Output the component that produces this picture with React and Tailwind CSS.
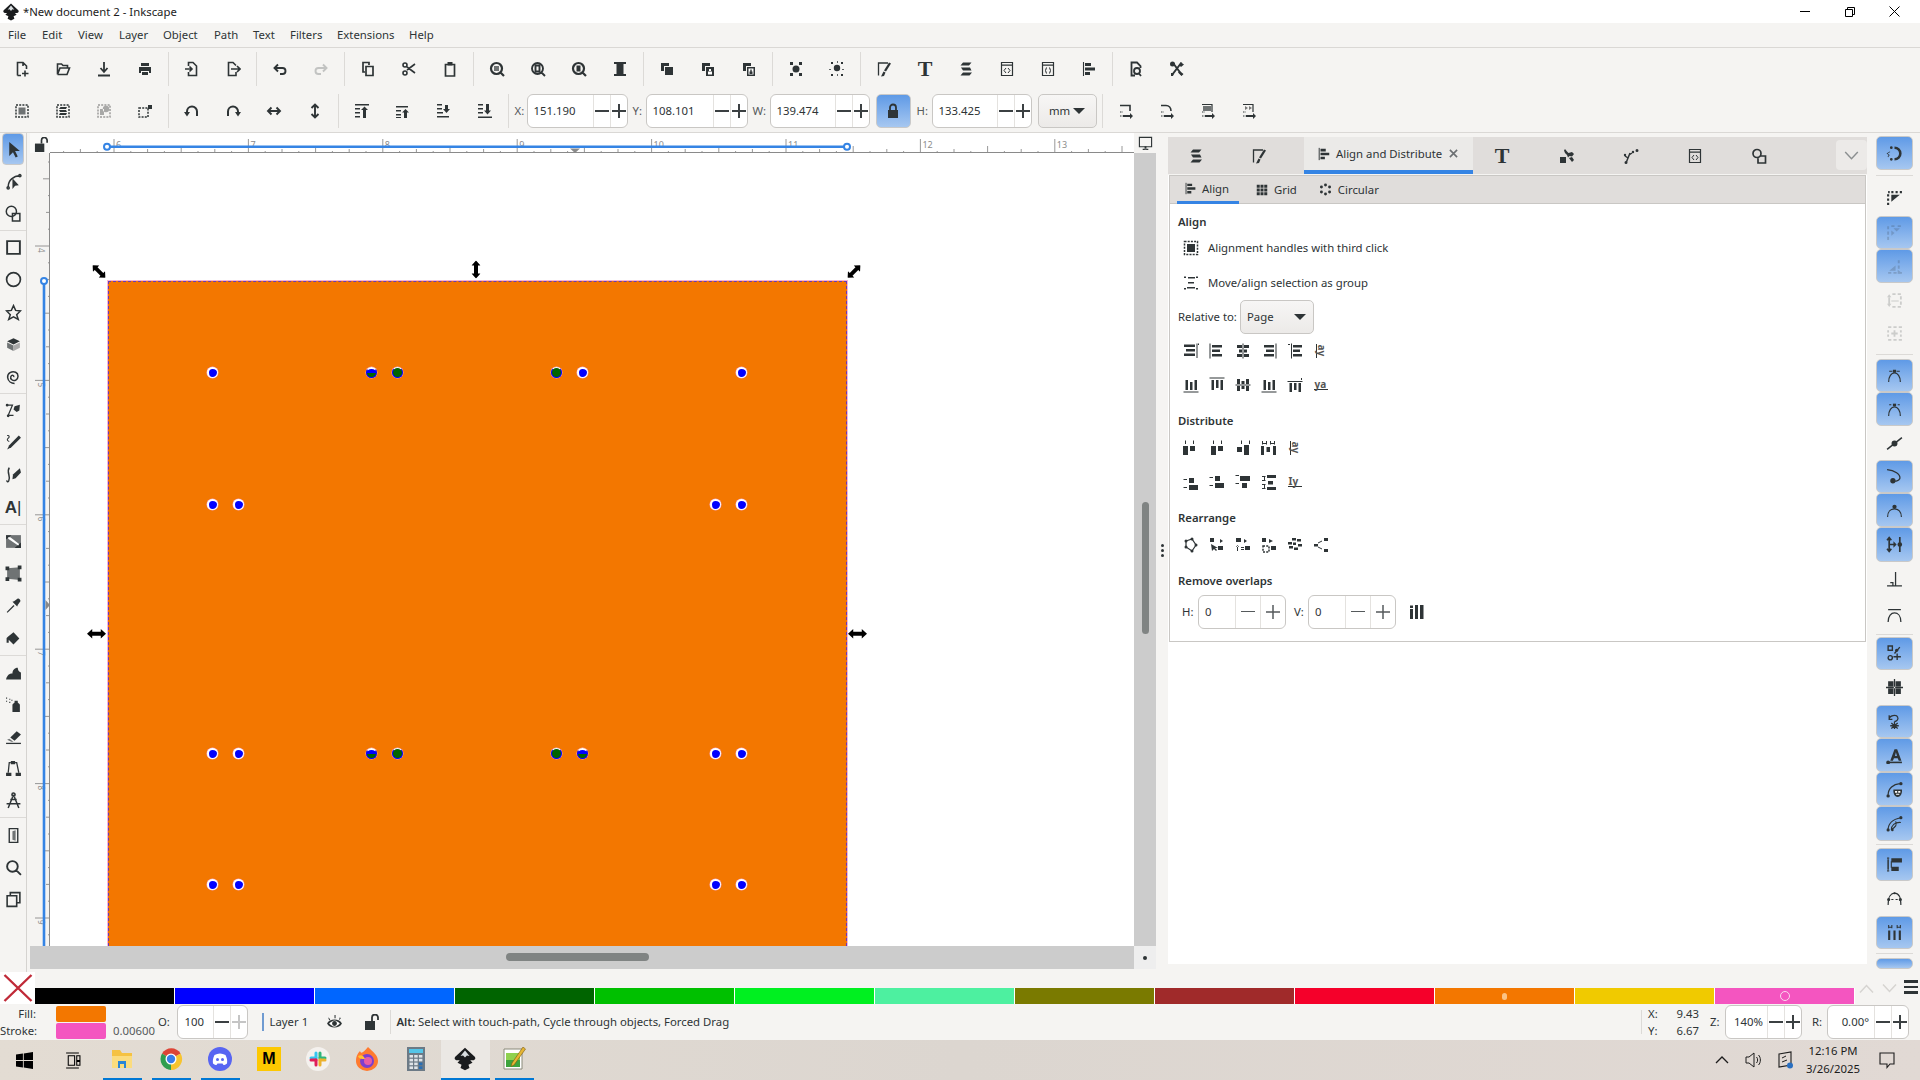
const circ = (x, y, r) => `M${x - r} ${y}a${r} ${r} 0 1 0 ${2 * r} 0a${r} ${r} 0 1 0 ${-2 * r} 0Z`

// every icon: f = filled path, s = stroked path, w = stroke width, g = grey fill, l = light fill, d = dashed stroke
const ICONS = {
  new: { s: 'M3.5 14.5V1.5H9L12.5 5V8M7 14.5H3.5M9 5V1.5M11 9.5V15.5M8 12.5H14.5', w: 1.6 },
  open: { s: 'M2.5 13.5V3H6.5L8 4.5H12.5V7M2.5 13.5H12L14.5 7H5L2.5 13.5', w: 1.6 },
  save: { s: 'M8 1V10M4.5 7L8 11L11.5 7M2 14.5H14', w: 1.8 },
  print: { f: 'M4 2H12V5H4ZM2 6H14V12H12V10H4V12H2ZM5 11H11V14H5Z' },
  import: { s: 'M4.5 5V1.5H9L12.5 5V14.5H4.5V11M1 8H8M5.5 5.5L8 8L5.5 10.5', w: 1.6 },
  export: { s: 'M11 4.5L8 1.5H3.5V14.5H11V11M6 8H15M12 5L15 8L12 11', w: 1.6 },
  undo: { s: 'M6 3.5L2.5 7L6 10.5M3 7H10.5A3 3 0 0 1 10.5 13H8', w: 1.9 },
  redo: { s: 'M10 3.5L13.5 7L10 10.5M13 7H5.5A3 3 0 0 0 5.5 13H8', w: 1.9 },
  copy: { s: 'M5 11H3V1.5H9V4M6 5.5H13V14.5H6Z', w: 1.7 },
  cut: { s: `M6 6L14 12M6 9L14 3${circ(4, 4, 2)}${circ(4, 12, 2)}`, w: 1.6 },
  paste: { s: 'M3.5 3.5H12.5V15H3.5Z', f: 'M5.5 1H10.5V4.5H5.5Z', w: 1.7 },
  zsel: { s: `${circ(7.5, 7.5, 5.5)}M11.5 11.5L15 15`, w: 2.2, g: 'M5 5H10V10H5Z' },
  zpage: { s: `${circ(7.5, 7.5, 5.5)}M11.5 11.5L15 15M5.5 4.5H9.5V10.5H5.5Z`, w: 1.9 },
  zdraw: { s: `${circ(7.5, 7.5, 5.5)}M11.5 11.5L15 15`, w: 2.2, f: 'M5.5 4.5H9.5V10.5H5.5Z' },
  zfit: { f: 'M2 1H14V3H2ZM2 13H14V15H2ZM4.5 3H11.5V13H4.5Z' },
  dup: { f: 'M2 2H10V5H5V10H2ZM6 6H14V14H6Z' },
  clone: { f: 'M2 2H10V5H5V10H2ZM6 6H14V15H6Z', wh: 'M8 10.5H12V13.5H8ZM9 8H11V10H9Z' },
  unlink: { f: 'M2 2H10V5H5V10H2ZM6 6H14V15H6Z', wh: 'M7.5 7.5H12.5V13.5H7.5Z', f2: 'M8.5 10.5H11.5V13H8.5ZM9.3 8.5H10.7V10.5H9.3Z' },
  group: { f: `M2 1h3v3H2ZM11 1h3v3h-3ZM2 12h3v3H2ZM11 12h3v3h-3Z${circ(8, 8, 3.5)}` },
  ungroup: { f: `M2 1h2v2H2ZM12 1h2v2h-2ZM2 13h2v2H2ZM12 13h2v2h-2Z${circ(8, 7, 3.2)}`, s: 'M8 1H9M1 8V9M14 8V9M8 14H9', w: 1.5 },
  fill: { s: 'M2.5 14.5V2H12', f: 'M13 1.5L15 2.5L10 10.5L8 9.5ZM7.5 10.5L9.5 11.5L8 15L5 15.5Z', w: 1.3 },
  layers: { f: 'M5 1.5H13.5L11 4.5H2.5ZM3 6.5H12L13.5 9.5H5ZM5 11.5H14L11.5 14.5H2.5Z' },
  xml: { s: 'M2.5 1.5H13.5V14.5H2.5ZM2.5 4.2H13.5', c: 'M7 7L5 9.5L7 12M9 7L11 9.5L9 12', w: 1.2 },
  css: { s: 'M2.5 1.5H13.5V14.5H2.5ZM2.5 4.2H13.5', c: 'M7 6.5C5.5 6.5 6.5 9.5 5 9.5C6.5 9.5 5.5 12.5 7 12.5M9 6.5C10.5 6.5 9.5 9.5 11 9.5C9.5 9.5 10.5 12.5 9 12.5', w: 1.2 },
  align: { s: 'M2.5 1V15', f: 'M4 2H10V5H4ZM4 6.5H14V9.5H4ZM4 11H9V14H4Z', w: 1.1 },
  docprop: { s: `M7 14.5H3.5V1.5H9L12.5 5V7${circ(9, 10, 3)}M11 12.5L13 15`, w: 1.8 },
  tools: { s: 'M4 2L13 14M12.5 1.5L3 14', f: `${circ(3.5, 3, 2.5)}M12 1.5L15 3.5L12 6L10 4ZM10.5 10L14.5 13L12.5 15L9 11.5ZM2 12L5 12L4 15L2 15Z`, w: 2 },
  selall: { d: 'M2 2H14V14H2Z', g: 'M4.5 4.5H11.5V11.5H4.5Z' },
  sellayers: { d: 'M2 2H14V14H2Z', f: 'M5.5 4H12L11 6H4ZM4 7H11L12 9H5ZM5 10H12L11 12H4Z' },
  deselect: { d: 'M2 2H14V14H2Z', dc: '#777', l: `M4 12V6H8V12Z${circ(10, 6, 3.2)}`, lc: '#888' },
  transform: { d: 'M2 5H11V14H2Z', f: 'M11 2H15V6H11Z' },
  rotl: { s: 'M3 9V8.5A5 5 0 0 1 13 8.5V13', w: 2, f: 'M0 9H6L3 13.5Z' },
  rotr: { s: 'M13 9V8.5A5 5 0 0 0 3 8.5V13', w: 2, f: 'M10 9H16L13 13.5Z' },
  fliph: { s: 'M2 8H14M5.5 4.5L2 8L5.5 11.5M10.5 4.5L14 8L10.5 11.5', w: 1.9 },
  flipv: { s: 'M8 1.5V14.5M4.5 5L8 1.5L11.5 5M4.5 11L8 14.5L11.5 11', w: 1.9 },
  top: { f: 'M1 1H15V2.5H1ZM1 5H6V6.5H1ZM1 9H6V10.5H1ZM1 13H6V14.5H1ZM9 15V7H7L10.5 3.5L14 7H12V15Z' },
  raise: { f: 'M1 3H13V4.5H1ZM1 7H6V8.5H1ZM1 11H6V12.5H1ZM1 14H6V15H1ZM9 15V9.5H7L10.5 6L14 9.5H12V15Z' },
  lower: { f: 'M1 1H6V2.5H1ZM1 5H6V6.5H1ZM1 9H7V10.5H1ZM1 13H13V14.5H1ZM9 2V6H7L10.5 10L14 6H12V2Z' },
  bottom: { f: 'M1 1H6V2.5H1ZM1 5H6V6.5H1ZM1 9H6V10.5H1ZM1 13.5H15V15H1ZM9 1V7.5H7L10.5 11.5L14 7.5H12V1Z' },
  aff1: { s: 'M2 2.5H12V8M12 4V8', f: 'M5 12V14H12V16L15 13L12 10V12Z', d2: 'M2 13H5M2 9H5', w: 1.6 },
  aff2: { s: 'M2 2.5H7C10 2.5 12 5 12 8', f: 'M5 12V14H12V16L15 13L12 10V12Z', d2: 'M2 13H5M2 9H5', w: 1.6 },
  aff3: { s: 'M2 1.5H12V9', g: 'M3 3H11V8H3Z', f: 'M5 12V14H12V16L15 13L12 10V12Z', d2: 'M2 13H5M2 9H5', w: 1.2 },
  aff4: { s: 'M2 1.5H12V9', l: 'M4 3L7 5L4 7ZM8 3L11 5L8 7Z', lc: '#777', f: 'M5 12V14H12V16L15 13L12 10V12Z', d2: 'M2 13H5M2 9H5', w: 1.2 },
  // tools
  arrow: { f: 'M4 1V14L7.5 10.5L10 15.5L12 14.5L9.5 9.5H14Z' },
  node: { s: `M3 13C3 7 8 2.5 14 2.5${circ(3, 14, 1)}${circ(14, 2.5, 1)}`, f: 'M7 5V15L9.5 12L13 11.5Z', w: 1.4 },
  builder: { s: `${circ(6, 6, 4.8)}M7 8H14V15H7Z`, w: 1.4 },
  rect: { s: 'M2 2H14V14H2Z', w: 1.8 },
  ellipse: { s: circ(8, 8, 6.5), w: 1.6 },
  star: { s: 'M8 1.5L10 6L14.5 6.5L11 10L12.5 14.5L8 12L3.5 14.5L5 10L1.5 6.5L6 6Z', w: 1.4 },
  box: { f: 'M2 5L8 2L14 5L8 8Z', g: 'M2 6V11L8 14V9Z', l: 'M14 6V11L8 14V9Z', lc: '#aaa' },
  spiral: { s: 'M8 8.5C9 7 6.5 6 5.5 8C4.5 10.5 7.5 12.5 10 11.5C13 10 13 5.5 10 4C6.5 2.5 2 5 2.5 9C3 12.5 6 14.5 9 14.5', w: 1.4 },
  bezier: { s: 'M2 3H7L3 12.5H8', f: `M9 4L14 2.5L13.5 8L11 9.5L8 7Z${circ(2, 3, 1.3)}${circ(3, 13, 1.3)}`, w: 1.2 },
  pencil: { f: 'M13 1.5L15 3.5L6 12.5L2 14.5L4 10.5Z', s: 'M2 1.5C4 1 5 3 2.5 4.5C1.5 5.5 3 7 4 7', w: 1 },
  calli: { s: 'M4 1.5C1 6 6 10 3.5 14C2.5 15.5 1.5 14.5 2 13.5', f: 'M7.5 8L14 2L15 6L10 11.5L7 12.5Z', w: 1.4 },
  gradient: { g: 'M1 2H15V14H1Z', wh: 'M3 4H5L13 10V11.5H12L3 5.5Z', f: 'M1 2H6L1 6ZM9 14L15 9V14Z' },
  mesh: { g: 'M2 3L14 2V14L2 13Z', f: 'M0.5 1.5h3.5v3.5H0.5ZM12 0.5h3.5v3.5H12ZM0.5 11.5h3.5v3.5H0.5ZM12 12h3.5v3.5H12Z' },
  dropper: { s: 'M2 14.5L8.5 8', f: 'M8.5 4L12 1.5C13 1 15 3 14.5 4L12 7.5L11.5 9L7 4.5Z', w: 1.2 },
  bucket: { f: 'M3 7L8 3L13.5 9L8 14.5L3.5 10V13H1.5V8.5Z' },
  tweak: { f: 'M1 14.5C2 10.5 4 9 7 9C7 6 9 3.5 12 3.5C12 5.5 13 7.5 15 8V14.5Z' },
  spray: { f: 'M7 8.5C7 7 8 7 9 6V4.5H12V6C13 7 14 7 14 8.5V15H7Z', s: 'M1 2H2M4 3H5M1 5H2M4 6H5M6 4H7', w: 1 },
  eraser: { f: 'M5 9L11 3L15 6L9 12Z', g: 'M4 10L8 13H6L2 11Z', s: 'M1 14.5H15', w: 1.2 },
  connector: { f: 'M5.5 1h4v3h-4ZM1 12h5v3H1ZM10 12h5v3h-5Z', s: 'M5.5 2.5H4L3 12M9.5 2.5H11L13 12', w: 1.2 },
  lpe: { s: `M8 2.5L3 15M8 2.5L13 15M1.5 11H14.5M5 7H11${circ(8, 2.5, 1.5)}`, w: 1.4 },
  pagetool: { s: 'M4 1.5H12V14.5H4Z', g: 'M7 4L10 3V13L7 12Z', w: 1.3 },
  zoom: { s: `${circ(7, 7, 5)}M10.5 10.5L15 15`, w: 1.8 },
  pages: { s: 'M5 4V1.5H14V11H11M2 4.5H11V14.5H2Z', w: 1.5 },
  // panel
  wrench: { f: 'M1 9H7V15H1ZM6 1L8 3.5L9.5 5L13 4L15 6L13 8.5L10.5 8L9 9.5L8 7L6 5L5 2.5Z M10 10L13 9L15 12L13 14Z' },
  pathfx: { s: 'M3 15L7 5M5 10L2 8M6 7L9 5', f: `${circ(14, 2.5, 1.5)}${circ(3, 14.5, 1.5)}${circ(10, 4, 1.2)}${circ(2, 7, 1.2)}`, w: 1.5 },
  shape: { s: `${circ(6, 5.5, 4)}M9 8H14.5V15H7V10`, w: 1.7 },
  grid: { f: 'M1 1h4v4H1ZM6 1h4v4H6ZM11 1h4v4h-4ZM1 6h4v4H1ZM6 6h4v4H6ZM11 6h4v4h-4ZM1 11h4v4H1ZM6 11h4v4H6ZM11 11h4v4h-4Z' },
  circular: { f: `${circ(8, 2.5, 1.8)}${circ(13, 5, 1.8)}${circ(13, 11, 1.8)}${circ(8, 13.5, 1.8)}${circ(3, 11, 1.8)}${circ(3, 5, 1.8)}` },
  handles3: { d: 'M1.5 1.5H14.5V14.5H1.5Z', f: 'M4 4H12V12H4Z' },
  groupAlign: { f: 'M1 1.5h2v1.5H1ZM13 1.5h2v1.5h-2ZM1 13h2v1.5H1ZM13 13h2v1.5h-2ZM5 2H12V3.5H5ZM5 7H11V8.5H5ZM4 12H12V13.5H4Z' },
  a1: { f: 'M1 1.5H12V4H1ZM3 6H12V8.5H3ZM1 10.5H12V13H1ZM13.5 .5H14.5V15H13.5ZM15 .5H16V2H15Z' },
  a2: { f: 'M.5 .5H1.5V15.5H.5ZM3 2H13V4.5H3ZM3 6.5H11V9H3ZM3 11H13V13.5H3Z' },
  a3: { f: 'M7.5 .5H8.5V15.5H7.5ZM2 2H7V5H2ZM9 2H14V5H9ZM4 6.5H7V9.5H4ZM9 6.5H12V9.5H9ZM2 11H7V14H2ZM9 11H14V14H9Z' },
  a4: { f: 'M14.5 .5H15.5V15.5H14.5ZM3 2H13V4.5H3ZM5 6.5H13V9H5ZM3 11H13V13.5H3Z' },
  a5: { f: 'M1 1H3V2H1ZM4 .5H5V15.5H4ZM6 2H15V4.5H6ZM6 6.5H13V9H6ZM6 11H15V13.5H6Z' },
  d1: { f: 'M2 .5H3V4H2ZM10 .5H11V4H10ZM0 6H5V15H0ZM7 6H12V11H7Z' },
  d2: { f: 'M4 .5H5V4H4ZM12 .5H13V4H12ZM2 6H7V15H2ZM9 6H14V11H9Z' },
  d3: { f: 'M6 .5H7V4H6ZM14 .5H15V4H14ZM2 7H7V12H2ZM9 5H14V15H9Z' },
  d4: { f: 'M1 1H2V3H5V1H6V4.5H5V4H2V4.5H1ZM9 1H10V3H13V1H14V4.5H13V4H10V4.5H9ZM0 6H3V15H0ZM5.5 7H9V12H5.5ZM12 6H15V15H12Z' },
  r1: { s: `M3 4L9 2L13 8L9 14L3 10Z`, f: `${circ(3, 4, 1.5)}${circ(9, 2, 1.5)}${circ(13, 8, 1.5)}${circ(9, 14, 1.5)}${circ(3, 10, 1.5)}`, w: 1.2 },
  r2: { f: 'M1 1H5V5H1ZM9 9H14V13H9ZM11 2L14 4L11 6ZM2 7L3 14L5 12L7 14L8 13L6 11H9Z' },
  r3: { f: 'M1 1H6V5H1ZM10 9H15V13H10ZM9 2L12 4L9 6ZM3 9V14H2V9ZM1 10L2.5 8L4 10ZM6 10H9V11H6ZM6 12H9V13H6Z' },
  r4: { f: 'M1 1H5V5H1ZM10 9H15V13H10ZM8 2L12 4L8 6Z', d: 'M2 9H8V15H2Z' },
  r5: { f: 'M5 1H9V3.5H5ZM10 2H14V4.5H10ZM1 5H5V7.5H1ZM6 5.5H9V8H6ZM11 7H15V9.5H11ZM2 9H6V11.5H2ZM7 10.5H11V13H7Z' },
  r6: { f: 'M1 7H5V9.5H1ZM11 1H15V4H11ZM11 12H15V15H11Z', s: 'M5 6L9 4M5 10L9 12', w: 1 },
  ill: { f: 'M1 1.5H4V4H1ZM1 5H4V15H1ZM6 1H9V15H6ZM11 1H14.5V15H11Z' },
  // snap bar
  magnet: { s: 'M8 2.5A5.5 5.5 0 1 1 8 13.5', f: `${circ(5, 2.5, 1.3)}${circ(5, 13.5, 1.3)}M4 6.5L1.5 8L3.5 9.5L2 11.5L1.5 11L2.5 9.5L0.5 8L3.5 6Z`, w: 2.4 },
  bbox: { s: 'M2 2H3.5M5 2H7M9 2H11M13 2H15M2 4V6M2 8V10M2 12V14', w: 2, f: 'M5 4.5H13L5 11Z' },
  bboxe: { s: 'M2 2V5M2 7V10M2 12V15M5 2H8M11 2H14', w: 1.8, f: 'M7 4H13L10 7ZM5 6V11L8 8.5Z' },
  bboxc: { s: 'M15 14H12M10 14H7M5 14H2M12 2V5M12 7V10', w: 1.8, f: 'M9 7V12H3ZM11 11L15 14L11 15Z' },
  bboxm: { s: 'M6 2H9M11 2H14M14 4V7M14 9V12M6 14H9M11 14H14M3 5V12', w: 1.7, f: 'M5 8H12V9H5ZM1 5L3 2L5 5ZM1 11L3 14L5 11Z' },
  bboxx: { s: 'M2 2H5M7 2H10M12 2H15M2 14H5M7 14H10M12 14H15M2 5V7M2 9V11M14 5V7M14 9V11M8 5V11M5 8H11', w: 1.7 },
  npath: { s: 'M2.5 14C2.5 9 5 5.5 8 5.5C11 5.5 13.5 9 13.5 14', f: 'M6.5 2.5H9.5V5.5H6.5ZM3 3.5H6V4.5H3ZM10 3.5H13V4.5H10Z', w: 1.1 },
  npath2: { s: 'M2.5 14C2.5 9 5 5.5 8 5.5C11 5.5 13.5 9 13.5 14M3 3.5H5M11 3.5H13', f: 'M6.5 2.5H9.5V5H6.5Z', w: 1.1 },
  nisect: { s: 'M1 13.5L15 2.5', f: circ(8, 8, 2.8), w: 1.4 },
  ncusp: { s: 'M1 1.5C8 2 14 6 13 10C12 12 9 13 6.5 12', f: circ(6.5, 12, 2.5), w: 1.2 },
  nsmooth: { s: 'M1.5 14C1.5 9 4.5 6.5 8 6.5C11.5 6.5 14.5 9 14.5 14', f: circ(8, 4.5, 2), w: 1.1 },
  nline: { s: 'M3 1.5V14.5M1 4L3 1.5L5 4M1 12L3 14.5L5 12M3 8H8M13 1V15', f: `M7 5L10 8L7 11Z${circ(13, 8, 2.2)}`, w: 1.6 },
  nperp: { s: 'M1 14H15M9 1V14M4 11H6.5V14', w: 1.2 },
  ntan: { s: 'M2 15C2 9 5 6.5 8 6.5C11 6.5 14 9 14 15M2 3.5H14', w: 1.2 },
  obj: { s: `M2 1H6V5H2Z${circ(4, 12, 2)}M7 11H14M10.5 8V14M8 8L13 2`, w: 1.3, f: circ(10, 5, 1.5) },
  ocenter: { f: 'M2 2H7V7H2ZM9 2H14V7H9ZM2 9H7V14H2ZM9 9H14V14H9ZM7.4 0H8.6V16H7.4ZM0 7.4H16V8.6H0Z' },
  orot: { s: 'M3 6C3 2 10 1 11 4C12 6 10 8 8 8M3 2V6H6M8 8V15M4 12H12M5 9.5L11 14.5M11 9.5L5 14.5', w: 1.2 },
  otext: { s: 'M3 14.5H15', f: `${circ(2, 14.5, 1.8)}M4 13L8 2H10.5L14.5 13H12L11 10.5H7.5L6.5 13ZM8.5 8.5H10.3L9.3 5Z` },
  ofx: { s: 'M2 13C2 7 7 3 13 2.5', f: `${circ(14, 2.5, 1.6)}${circ(2, 14, 1.6)}M7 8H15C15.5 11 14 15 11 15C8 15 6.5 11 7 8Z`, wh: 'M8.5 9.5H10.5V11H8.5ZM11.5 9.5H13.5V11H11.5ZM9.5 12H12.5V13H9.5Z', w: 1.2 },
  osec: { s: 'M2 14C2 8 6 4 14 2.5M5 14C5 10 8 6.5 14 7M5 14C9 11 11 9 9 6', f: `${circ(14, 2.5, 1.5)}${circ(2, 14, 1.5)}${circ(6, 14, 1.2)}`, w: 1 },
  obase: { f: 'M5 2H15V6H5ZM5 10H12V14H5Z', s: 'M2 3V13M1 2H3M1 14H3', w: 1.4, c: 'M5 5V11' },
  ocirc: { s: 'M2 14C2 6 5 3 8 3C11 3 14 6 14 14', w: 1.1, f: `${circ(8, 3, 1)}${circ(2.5, 9, 1.5)}${circ(13.5, 9, 1.5)}M5 8.5H7V9.5H5ZM9 8.5H11V9.5H9Z` },
  opage: { f: 'M2 6H4V15H2ZM7 6H9V15H7ZM12 6H14V15H12ZM2 1H3V2.5H5V1H6V4H5V3.5H3V4H2ZM10 1H11V2.5H13V1H14V4H13V3.5H11V4H10Z' },
  eye: { f: `${circ(8, 9, 3)}M1 9C3 4 13 4 15 9C13 14 3 14 1 9ZM2 3L4 5L3 6ZM8 1H9V4H8ZM13 3L14 4L12 6Z`, wh: 'M3 9C5 6 11 6 13 9C11 12 5 12 3 9Z', f2: circ(8, 9, 2.3) },
  lockopen: { f: 'M1 7H11V16H1Z', s: 'M8 7V3.5A3 3 0 0 1 14 3.5V6', w: 1.8 },
  lock: { f: 'M3 7H13V15H3Z', s: 'M5 7V4.5A3 3 0 0 1 11 4.5V7', w: 1.8 },
  monitor: { s: 'M1.5 1.5H14.5V11.5H1.5Z', f: 'M5 13.5H11V15H5ZM7 11H9V14H7Z', w: 1.2 },
}

function Ico({ n, size = 16, className = '', rot = 0 }) {
  const i = ICONS[n]
  const t = rot ? `rotate(${rot} 8 8)` : undefined
  return (
    <svg viewBox="0 0 16 16" width={size} height={size} className={`shrink-0 ${className}`}>
      <g transform={t}>
        {i.g && <path d={i.g} fill="#6f7374" />}
        {i.l && <path d={i.l} fill={i.lc || '#999'} />}
        {i.d && <path d={i.d} fill="none" stroke={i.dc || '#2e3436'} strokeWidth="1.5" strokeDasharray="2 1.2" />}
        {i.f && <path d={i.f} fill="#2e3436" fillRule="evenodd" />}
        {i.wh && <path d={i.wh} fill="#fff" />}
        {i.f2 && <path d={i.f2} fill="#2e3436" />}
        {i.s && <path d={i.s} fill="none" stroke="#2e3436" strokeWidth={i.w || 1.5} />}
        {i.c && <path d={i.c} fill="none" stroke="#2e3436" strokeWidth="1" />}
        {i.d2 && <path d={i.d2} fill="none" stroke="#2e3436" strokeWidth="1.2" strokeDasharray="1.5 1" />}
      </g>
    </svg>
  )
}

const Sep = () => (
  <div className="w-[6px] h-[34px] flex justify-center shrink-0">
    <div className="w-px h-full bg-[#dcdad7]" />
  </div>
)

function Bar({ items }) {
  return items.map((n, k) =>
    n === '|' ? <Sep key={k} /> : (
      <div key={k} className="w-[41px] h-[34px] flex items-center justify-center shrink-0">
        {n === 'T' && <span className="font-['Liberation_Serif',serif] font-bold text-[22px] leading-none text-[#2e3436]">T</span>}
        {n === 'redo' && <Ico n={n} className="opacity-25" />}
        {n === 'deselect' && <Ico n={n} className="opacity-70" />}
        {n !== 'T' && n !== 'redo' && n !== 'deselect' && <Ico n={n} />}
      </div>
    ))
}

const SpinBtn = ({ w, children }) => (
  <div className="flex items-center justify-center border-l border-[#e4e2df] shrink-0" style={{ width: w }}>{children}</div>
)

function Spin({ value, w, btn, text = 'pl-[6px]', dimPlus, strong = true }) {
  return (
    <div className="flex h-[34px] bg-white border border-[#c9c7c4] rounded-[6px] shrink-0 overflow-hidden" style={{ width: w }}>
      <div className={`flex-1 min-w-0 flex items-center text-[11.35px] text-[#2e3436] ${text}`}>{value}</div>
      <SpinBtn w={btn}><div className={`w-[14px] ${strong ? 'h-[2px] bg-[#3b4042]' : 'h-[1.5px] bg-[#555a5c]'}`} /></SpinBtn>
      <SpinBtn w={btn}>
        <svg viewBox="0 0 14 14" width="14" height="14"><path d="M0 7H14M7 0V14" stroke={dimPlus ? '#c5c5c5' : strong ? '#3b4042' : '#555a5c'} strokeWidth={strong ? 2 : 1.5} /></svg>
      </SpinBtn>
    </div>
  )
}

const TOOLS = [
  ['arrow', 'on'], ['node'], ['builder'], '|', ['rect'], ['ellipse'], ['star'], ['box'], ['spiral'], '|',
  ['bezier'], ['pencil'], ['calli'], ['A'], '|', ['gradient'], ['mesh'], ['dropper'], ['bucket'], '|',
  ['tweak'], ['spray'], ['eraser'], ['connector'], ['lpe'], '|', ['pagetool'], ['zoom'], ['pages'],
]

function Toolbox() {
  return (
    <div className="w-[27px] h-full border-r border-[#d5d3d0] flex flex-col shrink-0 overflow-hidden">
      {TOOLS.map((t, k) =>
        t === '|' ? <div key={k} className="h-px bg-[#dcdad7] my-[0.5px] shrink-0" /> : (
          <div key={k} className={`h-[32.2px] mx-[2px] flex items-center justify-center shrink-0 ${t[1] ? 'bg-linear-to-b from-[#5f9ae6] to-[#a6c7f0] border border-[#c9c9c9] rounded-[4px]' : ''}`}>
            {t[0] === 'A'
              ? <span className="font-['Liberation_Sans',sans-serif] font-bold text-[17px] text-[#2e3436] leading-none">A<span className="font-normal">|</span></span>
              : <Ico n={t[0]} size={17} />}
          </div>
        ))}
    </div>
  )
}

const TOP_LABELS = [6, 7, 8, 9, 10, 11, 12, 13]

function TopRuler() {
  const ticks = []
  for (let i = -3; i < 62; i++) {
    const x = 64 + i * 16.8
    const len = i % 8 === 0 ? 14 : i % 4 === 0 ? 7 : i % 2 === 0 ? 4 : 2
    ticks.push(<path key={i} d={`M${x} 20V${20 - len}`} stroke="#7d7d7d" strokeWidth="0.8" />)
  }
  return (
    <svg width="1084" height="20" className="block">
      {ticks}
      <path d="M0 19.5H1084" stroke="#8a8a8a" />
      {TOP_LABELS.map((l, k) => (
        <text key={l} x={66 + k * 134.4} y="15" fontSize="9" fill="#8c8c8c" fontFamily="Noto Sans, sans-serif">{l}</text>
      ))}
      <path d="M57 13.7H797" stroke="#3584e4" strokeWidth="2.6" />
      <circle cx="57" cy="13.7" r="3" fill="#fff" stroke="#3584e4" strokeWidth="2" />
      <circle cx="797" cy="13.7" r="3" fill="#fff" stroke="#3584e4" strokeWidth="2" />
      <path d="M520 15.5H530L525 20Z" fill="#8a8a8a" />
    </svg>
  )
}

function LeftRuler() {
  const ticks = []
  for (let i = -5; i < 48; i++) {
    const y = 93 + i * 16.8
    const len = i % 8 === 0 ? 15 : i % 4 === 0 ? 7 : i % 2 === 0 ? 4 : 2
    ticks.push(<path key={i} d={`M20 ${y}H${20 - len}`} stroke="#7d7d7d" strokeWidth="0.8" />)
  }
  return (
    <svg width="20" height="793" className="block shrink-0">
      {ticks}
      <path d="M19.5 0V793" stroke="#8a8a8a" />
      {[4, 5, 6, 7, 8, 9].map((l, k) => (
        <text key={l} x="0" y="0" fontSize="8" fill="#8c8c8c" fontFamily="Noto Sans, sans-serif" transform={`translate(8 ${95 + k * 134.4}) rotate(90)`}>{l}</text>
      ))}
      <path d="M14 128V793" stroke="#3584e4" strokeWidth="2.6" />
      <circle cx="14" cy="128" r="3" fill="#fff" stroke="#3584e4" strokeWidth="2" />
      <path d="M15.5 447V457L20 452Z" fill="#8a8a8a" />
    </svg>
  )
}

const DOTS = [
  [212, 372, 'b'], [371, 372, 'h'], [397, 372, 'g'], [556, 372, 'g'], [582, 372, 'b'], [741, 372, 'b'],
  [212, 504, 'b'], [238, 504, 'b'], [715, 504, 'b'], [741, 504, 'b'],
  [212, 753, 'b'], [238, 753, 'b'], [371, 753, 'h'], [397, 753, 'g'], [556, 753, 'g'], [582, 753, 'h'], [715, 753, 'b'], [741, 753, 'b'],
  [212, 884, 'b'], [238, 884, 'b'], [715, 884, 'b'], [741, 884, 'b'],
]

const DOT_CLS = {
  b: 'bg-[#0000ff] border-white border-t-2 border-l-2',
  h: 'bg-linear-to-b from-[#0000ff] from-50% to-[#006400] to-50% border-[#0000ff] border-t-white border-t-2',
  g: 'bg-[#006400] border-[#0000ff] border-t-white',
}

function Dots() {
  return DOTS.map(([x, y, v], k) => (
    <span
      key={k}
      className={`absolute w-[11px] h-[11px] rounded-full border shadow-[0_0_0_0.5px_#f5a6c8] ${DOT_CLS[v]}`}
      style={{ left: x - 50 - 5.5, top: y - 153 - 5.5 }}
    />
  ))
}

function Handle({ className, rot, w = 20 }) {
  return (
    <svg viewBox="0 0 20 10" width={w} height={w / 2} className={`absolute ${className}`} style={{ transform: `rotate(${rot}deg)` }}>
      <path d="M0 5L5.5 0V2.8H14.5V0L20 5L14.5 10V7.2H5.5V10Z" fill="#000" />
    </svg>
  )
}

function Canvas() {
  return (
    <div className="w-[1126px] h-full shrink-0 flex flex-col">
      <div className="flex h-[20px] bg-white shrink-0">
        <div className="w-[20px] flex items-start justify-center pt-[4px] pl-[3px] bg-[#f9f9f8]"><Ico n="lockopen" size={15} /></div>
        <TopRuler />
        <div className="w-[22px] bg-[#f5f4f2] flex items-center justify-center"><Ico n="monitor" size={15} /></div>
      </div>
      <div className="flex flex-1 min-h-0">
        <LeftRuler />
        <div className="flex-1 relative overflow-hidden bg-white">
          <div className="absolute left-[58px] top-[128px] w-[739px] bottom-0 bg-[#f37700] border border-b-0 border-dashed border-[#6a39b5] shadow-[0_0_0_1px_#f6b5d6]" />
          <Dots />
          <Handle className="left-[40px] top-[114px]" rot={45} w={18} />
          <Handle className="left-[417px] top-[112px]" rot={90} w={18} />
          <Handle className="left-[795px] top-[114px]" rot={-45} w={18} />
          <Handle className="left-[37px] top-[476px]" rot={0} w={19} />
          <Handle className="left-[798px] top-[476px]" rot={0} w={19} />
        </div>
        <div className="w-[22px] bg-[#cccccc] flex justify-center shrink-0 pt-[349px]">
          <div className="w-[7px] h-[132px] rounded-full bg-[#808483]" />
        </div>
      </div>
      <div className="flex h-[23px] mb-[3px] shrink-0">
        <div className="flex-1 bg-[#cccccc] pl-[476px] pt-[7px]">
          <div className="w-[143px] h-[8px] rounded-full bg-[#808483]" />
        </div>
        <div className="w-[22px] flex items-center justify-center bg-[#eeeeee]">
          <div className="w-[4px] h-[4px] rounded-full bg-[#2e3436]" />
        </div>
      </div>
    </div>
  )
}

const Heading = ({ children, className = '' }) => (
  <div className={`h-[18px] flex items-center text-[11.35px] font-semibold text-[#2e3436] ${className}`}>{children}</div>
)

function Letters({ a, rot = 0 }) {
  return (
    <svg viewBox="0 0 16 16" width="16" height="16" className="shrink-0">
      <g transform={`rotate(${rot} 8 8)`}>
        <path d="M1 12.5H15" stroke="#2e3436" strokeWidth="1" />
        <text x="1.5" y="11" fontSize="10" fontWeight="bold" fontFamily="Noto Sans, sans-serif" fill="#555">{a}</text>
      </g>
    </svg>
  )
}

function IconRow({ items, className = 'h-[34px]' }) {
  return (
    <div className={`flex items-center ${className}`}>
      {items.map((it, k) => (
        <div key={k} className="w-[26px] flex items-center justify-center">
          {it.t ? <Letters a={it.t} rot={it.r} /> : <Ico n={it.n} rot={it.r} />}
        </div>
      ))}
    </div>
  )
}

const ROW1 = [{ n: 'a1' }, { n: 'a2' }, { n: 'a3' }, { n: 'a4' }, { n: 'a5' }, { t: 'ay', r: 90 }]
const ROW2 = [{ n: 'a4', r: 90 }, { n: 'a2', r: 90 }, { n: 'a3', r: 90 }, { n: 'a4', r: 90 }, { n: 'a5', r: 90 }, { t: 'ya' }]
const DIST1 = [{ n: 'd1' }, { n: 'd2' }, { n: 'd3' }, { n: 'd4' }, { t: 'ay', r: 90 }]
const DIST2 = [{ n: 'd1', r: -90 }, { n: 'd2', r: -90 }, { n: 'd3', r: -90 }, { n: 'd4', r: -90 }, { t: 'Iy' }]
const REARR = [{ n: 'r1' }, { n: 'r2' }, { n: 'r3' }, { n: 'r4' }, { n: 'r5' }, { n: 'r6' }]

function AlignPanel() {
  return (
    <div className="px-[8px] pt-[9px] pb-[13px]">
      <Heading>Align</Heading>
      <div className="flex items-center h-[34px]">
        <div className="w-[26px] flex justify-center"><Ico n="handles3" /></div>
        <span className="ml-[4px] text-[11.35px] text-[#2e3436]">Alignment handles with third click</span>
      </div>
      <div className="flex items-center h-[34px] mt-[1px]">
        <div className="w-[26px] flex justify-center"><Ico n="groupAlign" /></div>
        <span className="ml-[4px] text-[11.35px] text-[#2e3436]">Move/align selection as group</span>
      </div>
      <div className="flex items-center h-[34px]">
        <span className="w-[62px] text-[11.35px] text-[#2e3436] whitespace-nowrap">Relative to:</span>
        <div className="w-[74px] h-[34px] flex items-center justify-between pl-[6px] pr-[7px] rounded-[5px] border border-[#c9c7c4] bg-linear-to-b from-[#f7f6f5] to-[#eceae8] text-[11.35px] text-[#2e3436]">
          Page
          <span className="w-0 h-0 border-x-[6px] border-x-transparent border-t-[6px] border-t-[#2e3436]" />
        </div>
      </div>
      <IconRow items={ROW1} />
      <IconRow items={ROW2} className="h-[33px]" />
      <Heading className="mt-[11px]">Distribute</Heading>
      <IconRow items={DIST1} className="h-[34px] mt-[1px]" />
      <IconRow items={DIST2} />
      <Heading className="mt-[10px]">Rearrange</Heading>
      <IconRow items={REARR} className="h-[34px] mt-[1px]" />
      <Heading className="mt-[10px]">Remove overlaps</Heading>
      <div className="flex items-center h-[33px] mt-[5px] text-[11.35px] text-[#2e3436]">
        <span className="w-[20px] pl-[4px]">H:</span>
        <Spin value="0" w={88} btn={25} strong={false} />
        <span className="w-[22px] pl-[8px]">V:</span>
        <Spin value="0" w={88} btn={25} strong={false} />
        <div className="ml-[13px]"><Ico n="ill" /></div>
      </div>
    </div>
  )
}

function Panel() {
  return (
    <div className="w-[699px] shrink-0 pt-[4px] pb-[8px] flex flex-col">
      <div className="flex h-[37px] bg-[#e0dddb] items-stretch shrink-0">
        <div className="w-[56px] flex items-center justify-center"><Ico n="layers" /></div>
        <div className="w-[70px] flex items-center justify-center"><Ico n="fill" /></div>
        <div className="w-[10px]" />
        <div className="w-[169px] bg-[#ebeae8] border-b-[4px] border-[#3584e4] flex items-center pl-[13px] text-[11.35px] text-[#2e3436]">
          <Ico n="align" size={14} />
          <span className="ml-[5px] whitespace-nowrap">Align and Distribute</span>
          <svg viewBox="0 0 10 10" width="9" height="9" className="ml-[7px]"><path d="M1 1L9 9M9 1L1 9" stroke="#6c7072" strokeWidth="1.8" /></svg>
        </div>
        <div className="w-[58px] flex items-center justify-center font-['Liberation_Serif',serif] font-bold text-[22px] text-[#2e3436]">T</div>
        <div className="w-[4px]" />
        {['wrench', 'pathfx', 'xml', 'shape'].map((n) => (
          <div key={n} className="w-[64px] flex items-center justify-center"><Ico n={n} /></div>
        ))}
        <div className="flex-1" />
        <div className="w-[31px] h-[30px] mt-[3px] rounded-[4px] bg-[#eceae8] flex items-center justify-center">
          <svg viewBox="0 0 16 10" width="15" height="9"><path d="M1 1L8 8.5L15 1" fill="none" stroke="#8b8f90" strokeWidth="1.6" /></svg>
        </div>
      </div>
      <div className="flex-1 min-h-0 bg-white mt-px">
        <div className="border border-[#c9c7c4] ml-px mr-px">
          <div className="h-[28px] bg-[#e0dddb] border-b border-[#c9c7c4] flex text-[11.35px] text-[#2e3436]">
            <div className="ml-[7px] w-[62px] h-[28px] border-b-[3px] border-[#3584e4] flex items-center pl-[7px]">
              <Ico n="align" size={13} /><span className="ml-[5px]">Align</span>
            </div>
            <div className="ml-[17px] flex items-center"><Ico n="grid" size={12} /><span className="ml-[6px]">Grid</span></div>
            <div className="ml-[22px] flex items-center"><Ico n="circular" size={13} /><span className="ml-[6px]">Circular</span></div>
          </div>
          <AlignPanel />
        </div>
      </div>
    </div>
  )
}

const SNAP = [
  ['magnet', 34, 1], 'sep10', ['bbox', 36, 0], ['bboxe', 33, 1, 1], ['bboxc', 34, 1, 1], ['bboxm', 34, 0, 1], ['bboxx', 33, 0, 1], 'sep9',
  ['npath', 33, 1], ['npath2', 34, 1], ['nisect', 34, 0], ['ncusp', 33, 1], ['nsmooth', 34, 1], ['nline', 35, 1], ['nperp', 35, 0], ['ntan', 35, 0], 'sep5',
  ['obj', 33, 1], ['ocenter', 35, 0], ['orot', 33, 1], ['otext', 34, 1], ['ofx', 34, 1], ['osec', 35, 1], 'sep7',
  ['obase', 33, 1], ['ocirc', 35, 0], ['opage', 33, 1], 'sep9', ['cut', 11, 1],
]

const SEP_H = { sep5: 'h-[5px]', sep7: 'h-[7px]', sep9: 'h-[9px]', sep10: 'h-[10px]' }

function SnapBar() {
  return (
    <div className="w-[53px] shrink-0 pt-[3px] pl-[9px] pr-[7px] flex flex-col overflow-hidden">
      {SNAP.map((s, k) => {
        if (typeof s === 'string') {
          return <div key={k} className={`${SEP_H[s]} flex items-center shrink-0`}><div className="h-px w-full bg-[#dcdad7]" /></div>
        }
        const [n, h, on, dim] = s
        const last = k === SNAP.length - 1
        return (
          <div
            key={k}
            className={`flex items-center justify-center shrink-0 ${on ? 'bg-linear-to-b from-[#5f9ae6] to-[#a6c7f0] border border-[#c9c9c9] rounded-[5px]' : ''}`}
            style={{ height: h }}
          >
            {!last && <Ico n={n} size={17} className={dim ? 'opacity-20' : ''} />}
          </div>
        )
      })}
    </div>
  )
}

const SWATCHES = ['#000000', '#0000ff', '#0066ff', '#006400', '#00c000', '#00f020', '#4df0a0', '#7a7a00', '#a02a2a', '#f5002a', '#f37700', '#f0ca00', '#f455c0']

function Palette() {
  return (
    <div className="flex h-[32px] shrink-0 bg-[#f5f4f2]">
      <div className="w-[35px] h-[32px] bg-white flex items-center justify-center">
        <svg width="30" height="28" viewBox="0 0 30 28"><path d="M1.5 1L28.5 27M28.5 1L1.5 27" stroke="#c02a38" strokeWidth="2.4" /></svg>
      </div>
      <div className="flex h-[16px] mt-[16px]">
        {SWATCHES.map((c, k) => (
          <div key={c} className="w-[140px] h-full border-r border-white flex items-center justify-center" style={{ background: c }}>
            {k === 10 && <span className="w-[5px] h-[7px] rounded-full bg-[#fbc384]" />}
            {k === 12 && <span className="w-[10px] h-[10px] rounded-full border border-[#fbd7ef]" />}
          </div>
        ))}
      </div>
      <div className="flex items-start pt-[12px] pl-[4px]">
        <svg width="15" height="9" viewBox="0 0 15 9"><path d="M1 8.5L7.5 1.5L14 8.5" fill="none" stroke="#d6d4d1" strokeWidth="1.5" /></svg>
        <svg width="15" height="9" viewBox="0 0 15 9" className="ml-[8px]"><path d="M1 .5L7.5 7.5L14 .5" fill="none" stroke="#d6d4d1" strokeWidth="1.5" /></svg>
        <div className="ml-[7px] w-[14px] flex flex-col gap-[3px] mt-[-4px]">
          <div className="h-[2.5px] bg-[#2e3436]" /><div className="h-[2.5px] bg-[#2e3436]" /><div className="h-[2.5px] bg-[#2e3436]" />
        </div>
      </div>
    </div>
  )
}

function StatusBar() {
  return (
    <div className="h-[36px] shrink-0 bg-[#f5f4f2] flex items-center text-[11.35px] text-[#2e3436]">
      <div className="w-[36px] text-right leading-[17px] whitespace-nowrap">
        <div>Fill:</div>
        <div>Stroke:</div>
      </div>
      <div className="ml-[20px] w-[50px] flex flex-col gap-px">
        <div className="h-[16px] rounded-[2px] bg-[#f37700]" />
        <div className="h-[16px] rounded-[2px] bg-[#f455c0]" />
      </div>
      <div className="ml-[7px] w-[45px] self-end mb-[1px] text-[#555a5c]">0.00600</div>
      <div className="w-[18.5px]">O:</div>
      <Spin value="100" w={71} btn={17} text="pl-[7px]" dimPlus />
      <div className="ml-[14px] w-[2px] h-[18px] bg-[#6f9bd1]" />
      <div className="ml-[6px] w-[50px]">Layer 1</div>
      <div className="w-[30px] flex justify-center"><Ico n="eye" size={17} /></div>
      <div className="ml-[7px] w-[30px] flex justify-center"><Ico n="lockopen" size={16} /></div>
      <div className="ml-[3px] w-px h-[24px] bg-[#dcdad7]" />
      <div className="ml-[6px] whitespace-nowrap"><b className="font-semibold">Alt:</b> Select with touch-path, Cycle through objects, Forced Drag</div>
      <div className="ml-auto w-px h-[24px] bg-[#dcdad7]" />
      <div className="ml-[6px] w-[51px] leading-[17px]">
        <div className="flex justify-between"><span>X:</span><span>9.43</span></div>
        <div className="flex justify-between"><span>Y:</span><span>6.67</span></div>
      </div>
      <div className="ml-[11px] w-[15px]">Z:</div>
      <Spin value="140%" w={77} btn={17} text="pl-[8px]" />
      <div className="ml-[10px] w-[15px]">R:</div>
      <Spin value="0.00°" w={82} btn={17} text="justify-end pr-[5px]" />
      <div className="w-[11px]" />
    </div>
  )
}

function Logo({ size = 18 }) {
  return (
    <svg viewBox="0 0 16 16" width={size} height={size} className="shrink-0">
      <path d="M8 .5L14.5 6.5C15.5 7.8 14.3 9 13 8.8H11.5L13 10.5L10.3 11.8L11 14L8 15.5L5 14L5.7 11.8L3 10.5L4.5 8.8H3C1.7 9 .5 7.8 1.5 6.5Z" fill="#1a1c1e" />
      <path d="M8 2.3L11 6L9.3 5.6L8 7L6.7 5.6L5 6Z" fill="#d8dde0" />
    </svg>
  )
}

function TaskIcon({ name }) {
  if (name === 'explorer') {
    return (
      <svg viewBox="0 0 24 24" width="24" height="24">
        <path d="M2 3H10L12 6H22V21H2Z" fill="#f5c242" />
        <path d="M2 9H22V21H2Z" fill="#fbdc7e" />
        <path d="M8 14H16V21H8Z" fill="#2a86d6" /><path d="M10 17H14V21H10Z" fill="#fbdc7e" />
      </svg>
    )
  }
  if (name === 'chrome') {
    return (
      <svg viewBox="0 0 24 24" width="24" height="24">
        <path d="M12 12L3 6.5A11 11 0 0 1 21.6 6.5Z" fill="#dd4436" />
        <path d="M12 12L21.6 6.5A11 11 0 0 1 12 23Z" fill="#f7c42f" />
        <path d="M12 12L12 23A11 11 0 0 1 3 6.5Z" fill="#2f9e4f" />
        <circle cx="12" cy="12" r="5.5" fill="#fff" /><circle cx="12" cy="12" r="4.2" fill="#3b7de8" />
      </svg>
    )
  }
  if (name === 'discord') {
    return (
      <svg viewBox="0 0 24 24" width="24" height="24">
        <circle cx="12" cy="12" r="12" fill="#5865f2" />
        <path d="M6.5 8C10 6 14 6 17.5 8C19 11 19.5 13.5 19 16.5C17.5 17.5 16.5 18 15.5 18L14.5 16.5H9.5L8.5 18C7.5 18 6.5 17.5 5 16.5C4.5 13.5 5 11 6.5 8Z" fill="#fff" />
        <circle cx="9.5" cy="12.5" r="1.5" fill="#5865f2" /><circle cx="14.5" cy="12.5" r="1.5" fill="#5865f2" />
      </svg>
    )
  }
  if (name === 'm') {
    return <div className="w-[24px] h-[24px] bg-[#fdc800] flex items-center justify-center text-[16px] font-bold text-black font-['Liberation_Sans',sans-serif]">M</div>
  }
  if (name === 'slack') {
    return (
      <svg viewBox="0 0 24 24" width="24" height="24">
        <circle cx="12" cy="12" r="12" fill="#f4f1ee" />
        <g strokeWidth="3" strokeLinecap="round">
          <path d="M10 6V11" stroke="#36c5f0" /><path d="M5 11H10" stroke="#36c5f0" />
          <path d="M14 6V11" stroke="#2eb67d" /><path d="M14 11H19" stroke="#2eb67d" />
          <path d="M14 13V18" stroke="#ecb22e" /><path d="M14 13H19" stroke="#ecb22e" />
          <path d="M10 13V18" stroke="#e01e5a" /><path d="M5 13H10" stroke="#e01e5a" />
        </g>
      </svg>
    )
  }
  if (name === 'firefox') {
    return (
      <svg viewBox="0 0 24 24" width="24" height="24">
        <path d="M13 0C18 5 23 8 23 14A11 10 0 0 1 1 14C1 8 4 5 5 4C6 7 8 6 13 0Z" fill="#ff7a2f" />
        <circle cx="12" cy="14" r="7" fill="#7b3fd0" /><circle cx="13" cy="14" r="4" fill="#e85ca5" />
        <path d="M3 9C6 7 9 9 10 12C6 12 4 12 3 9Z" fill="#ffc233" />
      </svg>
    )
  }
  if (name === 'calc') {
    return (
      <svg viewBox="0 0 18 24" width="18" height="24">
        <path d="M0 0H18V24H0Z" fill="#6c7a86" /><path d="M2 2H16V6H2Z" fill="#54c5e8" />
        {[0, 1, 2].map((c) => [0, 1, 2, 3].map((r) => (
          <path key={`${c}${r}`} d={`M${2.5 + c * 4.7} ${8 + r * 3.8}h3.5v2.6h-3.5Z`} fill={c === 2 && r > 1 ? '#2a6fb5' : '#dfe4e8'} />
        )))}
      </svg>
    )
  }
  if (name === 'notes') {
    return (
      <svg viewBox="0 0 24 24" width="24" height="24">
        <path d="M2 2H20V22H2Z" fill="#fff" stroke="#8a8a7a" />
        <path d="M4 6H18V20H4Z" fill="#8fd14f" /><path d="M4 13H18V20H4Z" fill="#3da33d" />
        <path d="M21 0L23.5 2L12 18L9 19.5L10 16Z" fill="#e5b534" stroke="#7a5a10" strokeWidth=".6" />
      </svg>
    )
  }
  return <Logo size={24} />
}

const APPS = [
  ['explorer', 1], ['chrome', 1], ['discord', 1], ['m', 0], ['slack', 0], ['firefox', 0], ['calc', 0], ['inkscape', 2], ['notes', 1],
]

function Taskbar() {
  return (
    <div className="h-[40px] shrink-0 flex bg-linear-to-r from-[#e3dcd3] via-[#dcd6d0] to-[#e1d9d4] text-[11.35px] text-[#1c1c1c]">
      <div className="w-[48px] flex items-center justify-center">
        <svg viewBox="0 0 16 16" width="17" height="17"><path d="M0 2.3L6.5 1.4V7.6H0ZM7.3 1.3L16 0V7.6H7.3ZM0 8.4H6.5V14.6L0 13.7ZM7.3 8.4H16V16L7.3 14.7Z" fill="#000" /></svg>
      </div>
      <div className="w-[49.5px] flex items-center justify-center">
        <svg viewBox="0 0 16 16" width="17" height="17"><path d="M2 1H14M2 15H14M4 3.5H10V12.5H4ZM12 3.5H15V8H12ZM12 9H15V12.5H12Z" fill="none" stroke="#000" strokeWidth="1" /></svg>
      </div>
      {APPS.map(([n, u]) => (
        <div key={n} className={`w-[49px] flex flex-col ${u === 2 ? 'bg-[#ebe8e4]' : ''}`}>
          <div className="flex-1 flex items-center justify-center"><TaskIcon name={n} /></div>
          <div className={`h-[2px] ${u ? 'bg-[#0078d4]' : ''} ${u === 2 ? 'mx-0' : 'mx-[5px]'}`} />
        </div>
      ))}
      <div className="ml-auto flex items-center">
        <div className="w-[31px] flex justify-center">
          <svg viewBox="0 0 14 8" width="14" height="8"><path d="M1 7L7 1L13 7" fill="none" stroke="#1c1c1c" strokeWidth="1.3" /></svg>
        </div>
        <div className="w-[31px] flex justify-center">
          <svg viewBox="0 0 18 18" width="18" height="18"><path d="M2 6H5L10 2V16L5 12H2ZM12.5 6C14 7.5 14 10.5 12.5 12M14.5 4C17 6.5 17 11.5 14.5 14" fill="none" stroke="#1c1c1c" strokeWidth="1" /></svg>
        </div>
        <div className="w-[34px] flex justify-center">
          <svg viewBox="0 0 18 18" width="18" height="18"><path d="M3 3L15 1V14L3 16Z" fill="none" stroke="#1c1c1c" strokeWidth="1.1" /><path d="M6 7L10 5M6 11L11 9" stroke="#1c1c1c" /><circle cx="14" cy="14.5" r="3" fill="#2a6fc0" /></svg>
        </div>
        <div className="w-[62px] text-center leading-[18px]">
          <div>12:16 PM</div>
          <div>3/26/2025</div>
        </div>
        <div className="w-[46px] flex justify-center">
          <svg viewBox="0 0 18 18" width="18" height="18"><path d="M2 2H16V13H12L9 16.5V13H2Z" fill="none" stroke="#1c1c1c" strokeWidth="1.1" /></svg>
        </div>
        <div className="w-[10px]" />
      </div>
    </div>
  )
}

const MENU = [['File', 34], ['Edit', 36], ['View', 41], ['Layer', 44], ['Object', 51], ['Path', 39], ['Text', 37], ['Filters', 47], ['Extensions', 72], ['Help', 40]]

const BAR1 = ['new', 'open', 'save', 'print', '|', 'import', 'export', '|', 'undo', 'redo', '|', 'copy', 'cut', 'paste', '|', 'zsel', 'zpage', 'zdraw', 'zfit', '|', 'dup', 'clone', 'unlink', '|', 'group', 'ungroup', '|', 'fill', 'T', 'layers', 'xml', 'css', 'align', '|', 'docprop', 'tools']
const BAR2 = ['selall', 'sellayers', 'deselect', 'transform', '|', 'rotl', 'rotr', 'fliph', 'flipv', '|', 'top', 'raise', 'lower', 'bottom']
const BAR3 = ['aff1', 'aff2', 'aff3', 'aff4']

export default function App() {
  return (
    <div className="w-[1920px] h-[1080px] overflow-hidden flex flex-col bg-[#f5f4f2] font-['Noto_Sans',sans-serif]">
      <div className="h-[23px] bg-white flex items-center shrink-0">
        <div className="w-[23px] pl-[2px]"><Logo /></div>
        <span className="text-[11.35px] text-[#1c1c1c]">*New document 2 - Inkscape</span>
        <div className="ml-auto flex items-center h-full pr-[3px]">
          <div className="w-[45px] flex justify-center"><div className="w-[10px] h-px bg-black" /></div>
          <div className="w-[45px] flex justify-center">
            <svg viewBox="0 0 10 10" width="10" height="10"><path d="M2.5 2.5V.5H9.5V7.5H7.5M.5 2.5H7.5V9.5H.5Z" fill="none" stroke="#000" /></svg>
          </div>
          <div className="w-[45px] flex justify-center">
            <svg viewBox="0 0 11 11" width="11" height="11"><path d="M.5 .5L10.5 10.5M10.5 .5L.5 10.5" stroke="#000" /></svg>
          </div>
        </div>
      </div>

      <div className="h-[25px] border-b border-[#dad8d5] flex items-center pl-[8px] text-[11.35px] text-[#2e3436] shrink-0">
        {MENU.map(([m, w]) => <span key={m} style={{ width: w }}>{m}</span>)}
      </div>

      <div className="h-[42px] flex items-center pl-[1.5px] shrink-0"><Bar items={BAR1} /></div>

      <div className="h-[43px] border-b border-[#dad8d5] flex items-center pl-[1.5px] text-[11.35px] text-[#555a5c] shrink-0">
        <Bar items={BAR2} />
        <Sep />
        <span className="w-[15px] pl-[3px]">X:</span>
        <Spin value="151.190" w={101} btn={17} text="pl-[6px]" />
        <span className="w-[18px] pl-[5px]">Y:</span>
        <Spin value="108.101" w={102} btn={17} text="pl-[6px]" />
        <span className="w-[22px] pl-[5px]">W:</span>
        <Spin value="139.474" w={100} btn={17} text="pl-[6px]" />
        <div className="ml-[6px] w-[35px] h-[34px] rounded-[5px] border border-[#c9c9c9] bg-linear-to-b from-[#5f9ae6] to-[#a6c7f0] flex items-center justify-center"><Ico n="lock" /></div>
        <span className="w-[21px] pl-[6px]">H:</span>
        <Spin value="133.425" w={100} btn={17} text="pl-[6px]" />
        <div className="ml-[6px] w-[59px] h-[34px] rounded-[5px] border border-[#c9c7c4] bg-linear-to-b from-[#f7f6f5] to-[#eceae8] flex items-center justify-center gap-[3px] text-[#2e3436]">
          mm<span className="w-0 h-0 border-x-[6px] border-x-transparent border-t-[6px] border-t-[#2e3436]" />
        </div>
        <div className="w-[3px]" />
        <Sep />
        <Bar items={BAR3} />
      </div>

      <div className="flex h-[839px] shrink-0">
        <div className="w-[30px] shrink-0"><Toolbox /></div>
        <Canvas />
        <div className="w-[12px] shrink-0 flex flex-col items-center pt-[411px] gap-[2px]">
          <span className="w-[3px] h-[3px] rounded-full bg-[#2e3436]" />
          <span className="w-[3px] h-[3px] rounded-full bg-[#2e3436]" />
          <span className="w-[3px] h-[3px] rounded-full bg-[#2e3436]" />
        </div>
        <Panel />
        <SnapBar />
      </div>

      <Palette />
      <StatusBar />
      <Taskbar />
    </div>
  )
}
